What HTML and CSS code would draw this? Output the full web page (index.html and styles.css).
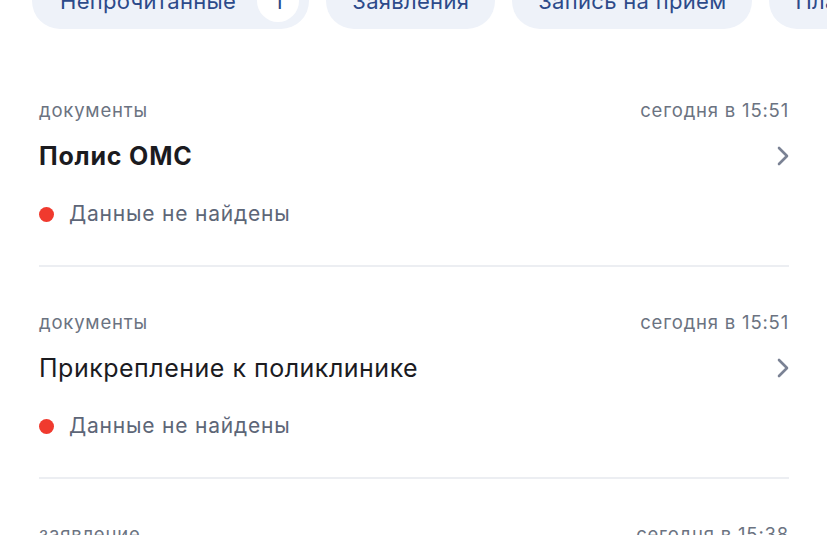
FILE: index.html
```html
<!DOCTYPE html>
<html lang="ru">

<head>
  <meta charset="UTF-8">
  <meta name="viewport" content="width=device-width, initial-scale=1.0">
  <title>Уведомления</title>
  <link rel="stylesheet" href="styles.css">
</head>

<body>
  <div class="chips">
    <div class="chip">Непрочитанные <span class="badge">1</span></div>
    <div class="chip">Заявления</div>
    <div class="chip">Запись на прием</div>
    <div class="chip">Платежи</div>
  </div>

  <div class="list">
    <div class="item">
      <div class="meta">
        <span>документы</span>
        <span>сегодня в 15:51</span>
      </div>
      <div class="title-row">
        <span class="title bold">Полис ОМС</span>
        <svg class="chevron" width="14" height="20" viewBox="0 0 14 20">
          <path d="M3 2 L11 10 L3 18" fill="none" stroke="#7a8294" stroke-width="2.6" stroke-linecap="round" stroke-linejoin="round"/>
        </svg>
      </div>
      <div class="status"><span class="dot"></span>Данные не найдены</div>
    </div>

    <div class="item">
      <div class="meta">
        <span>документы</span>
        <span>сегодня в 15:51</span>
      </div>
      <div class="title-row">
        <span class="title">Прикрепление к поликлинике</span>
        <svg class="chevron" width="14" height="20" viewBox="0 0 14 20">
          <path d="M3 2 L11 10 L3 18" fill="none" stroke="#7a8294" stroke-width="2.6" stroke-linecap="round" stroke-linejoin="round"/>
        </svg>
      </div>
      <div class="status"><span class="dot"></span>Данные не найдены</div>
    </div>

    <div class="item">
      <div class="meta">
        <span>заявление</span>
        <span>сегодня в 15:38</span>
      </div>
    </div>
  </div>
</body>

</html>
```

FILE: styles.css
```css
body {
  margin: 0;
  font-family: Inter, "Noto Sans", sans-serif;
  background-color: #ffffff;
  overflow: hidden;
}

.chips {
  display: flex;
  gap: 17px;
  margin-top: -27px;
  padding-left: 32px;
  white-space: nowrap;
}

.chip {
  display: flex;
  align-items: center;
  flex-shrink: 0;
  height: 56px;
  padding: 0 26px;
  border-radius: 28px;
  background-color: #eef2f9;
  color: #2c4a8a;
  font-size: 22px;
  letter-spacing: 0.3px;
}

.chip:first-child {
  padding-left: 28px;
}

.badge {
  display: inline-flex;
  justify-content: center;
  align-items: center;
  width: 42px;
  height: 42px;
  margin-left: 21px;
  margin-right: -16px;
  border-radius: 50%;
  background-color: #ffffff;
}

.list {
  padding: 0 38px 0 39px;
  margin-top: 69px;
}

.item {
  border-bottom: 2px solid #eceef2;
  padding-bottom: 38px;
  margin-bottom: 43px;
}

.meta {
  display: flex;
  justify-content: space-between;
  color: #6b7381;
  font-size: 18.5px;
  line-height: 24px;
  letter-spacing: 0.8px;
}

.title-row {
  display: flex;
  justify-content: space-between;
  align-items: center;
  margin-top: 19px;
}

.title {
  font-size: 25px;
  line-height: 30px;
  letter-spacing: 0.5px;
  color: #1b1b1f;
}

.title.bold {
  font-weight: 700;
  letter-spacing: 0.8px;
}

.chevron {
  margin-right: -1px;
}

.status {
  display: flex;
  align-items: center;
  margin-top: 30px;
  font-size: 21px;
  line-height: 26px;
  letter-spacing: 0.8px;
  color: #5d6677;
}

.dot {
  width: 15px;
  height: 15px;
  border-radius: 50%;
  background-color: #f03a2e;
  margin-right: 15px;
}
```
